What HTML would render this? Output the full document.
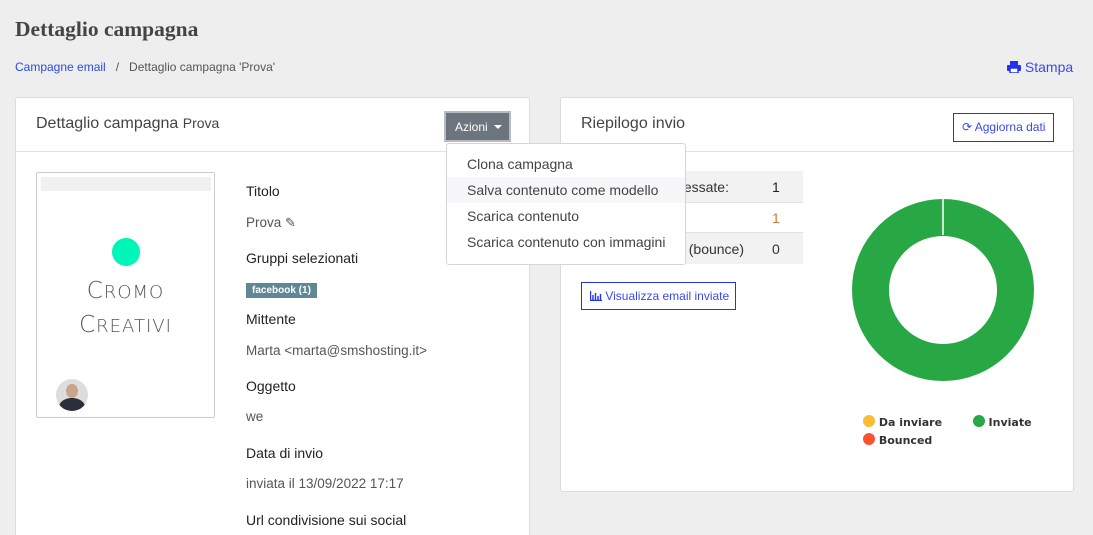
<!DOCTYPE html>
<html><head><meta charset="utf-8"><style>
*{box-sizing:border-box;margin:0;padding:0}
html,body{width:1093px;height:535px;overflow:hidden}
body{background:#eeeeee;font-family:"Liberation Sans",Arial,sans-serif;color:#333;position:relative}
.a{position:absolute;white-space:nowrap}
.card{position:absolute;background:#fff;border:1px solid #dcdcdc;border-radius:3px}
.hr{position:absolute;left:0;right:0;height:1px;background:#e2e2e2}
.lbl{font-size:14px;color:#222}
.val{font-size:13.5px;color:#555}
</style></head><body>
<div class="a" style="left:15px;top:17px;font-family:'Liberation Serif',serif;font-weight:bold;font-size:21.5px;color:#444">Dettaglio campagna</div>
<div class="a" style="left:15px;top:60px;font-size:12px;color:#555"><span style="color:#2a4ae0">Campagne email</span>&nbsp;&nbsp; /&nbsp;&nbsp; Dettaglio campagna 'Prova'</div>
<div class="a" style="left:1007px;top:59px;font-size:14px;color:#3a4ae8"><svg width="14" height="12" viewBox="0 0 14 12" style="vertical-align:-1px"><rect x="3" y="0" width="8" height="4" fill="#2233ee"/><rect x="0" y="4" width="14" height="6" rx="1" fill="#2233ee"/><rect x="3" y="7" width="8" height="5" fill="#fff" stroke="#2233ee" stroke-width="1.5"/></svg> Stampa</div>

<div class="card" style="left:15px;top:97px;width:515px;height:450px">
  <div class="a" style="left:20px;top:17px;font-size:16px;color:#444">Dettaglio campagna <span style="font-size:14px">Prova</span></div>
  <div class="a" style="left:428px;top:13px;width:67px;height:31px;background:#6c757d;border:2px solid #b8bcc0;color:#fff;font-size:12px;padding:7px 0 0 9px">Azioni <span style="display:inline-block;border:4px solid transparent;border-top:4px solid #fff;border-bottom:0;vertical-align:2px;margin-left:3px"></span></div>
  <div class="hr" style="top:53px"></div>
  <div class="a" style="left:20px;top:74px;width:179px;height:246px;border:1px solid #ccc;border-radius:2px">
    <div class="a" style="left:4px;top:4px;width:170px;height:14px;background:#f0f0f0"></div>
    <div class="a" style="left:75px;top:65px;width:28px;height:28px;border-radius:50%;background:#00f5b8"></div>
    <div class="a" style="left:0;width:177px;text-align:center;top:102px;font-size:23px;color:#555;letter-spacing:1px;line-height:32px;font-family:'DejaVu Sans',sans-serif;font-weight:200;transform:scaleY(1);">C<span style="font-size:18px">ROMO</span><br>C<span style="font-size:18px">REATIVI</span></div>
    <div class="a" style="left:19px;top:206px;width:32px;height:32px;border-radius:50%;overflow:hidden;background:#ddd">
      <div class="a" style="left:10px;top:5px;width:12px;height:14px;border-radius:50%;background:#c9a38a"></div>
      <div class="a" style="left:3px;top:19px;width:26px;height:18px;border-radius:50% 50% 0 0;background:#2a2f3a"></div>
    </div>
  </div>
  <div class="a lbl" style="left:230px;top:85px">Titolo</div>
  <div class="a val" style="left:230px;top:117px">Prova <span style="font-size:13px">&#9998;</span></div>
  <div class="a lbl" style="left:230px;top:152px">Gruppi selezionati</div>
  <div class="a" style="left:230px;top:185px;background:#5f8796;color:#fff;font-size:10px;font-weight:bold;padding:2px 6px">facebook (1)</div>
  <div class="a lbl" style="left:230px;top:213px">Mittente</div>
  <div class="a val" style="left:230px;top:245px">Marta &lt;marta@smshosting.it&gt;</div>
  <div class="a lbl" style="left:230px;top:280px">Oggetto</div>
  <div class="a val" style="left:230px;top:311px">we</div>
  <div class="a lbl" style="left:230px;top:347px">Data di invio</div>
  <div class="a val" style="left:230px;top:378px">inviata il 13/09/2022 17:17</div>
  <div class="a lbl" style="left:230px;top:414px">Url condivisione sui social</div>
</div>

<div class="card" style="left:560px;top:97px;width:514px;height:395px">
  <div class="a" style="left:20px;top:17px;font-size:16px;color:#444">Riepilogo invio</div>
  <div class="a" style="left:392px;top:15px;width:101px;height:29px;border:1px solid #2233ee;color:#3a4ae8;font-size:12px;padding:6px 0 0 8px">&#10227; Aggiorna dati</div>
  <div class="hr" style="top:53px"></div>
  <div class="a" style="left:19px;top:73px;width:223px;height:31px;background:#f2f2f2"></div>
  <div class="a" style="left:19px;top:104px;width:223px;height:31px;border-top:1px solid #e2e2e2;border-bottom:1px solid #e2e2e2"></div>
  <div class="a" style="left:19px;top:135px;width:223px;height:31px;background:#f2f2f2"></div>
  <div class="a" style="left:20px;top:81px;width:148px;text-align:right;font-size:14px;color:#333">Email processate:</div>
  <div class="a" style="left:20px;top:143px;width:163px;text-align:right;font-size:14px;color:#333">Non consegnate (bounce)</div>
  <div class="a" style="left:211px;top:81px;font-size:14px;color:#222">1</div>
  <div class="a" style="left:211px;top:112px;font-size:14px;color:#d07a30">1</div>
  <div class="a" style="left:211px;top:143px;font-size:14px;color:#333">0</div>
  <div class="a" style="left:20px;top:184px;width:155px;height:28px;border:1px solid #2233ee;color:#3a4ae8;font-size:12px;padding:6px 0 0 8px"><svg width="12" height="10" viewBox="0 0 12 10" style="vertical-align:-1px"><path d="M0.5 0V9.5H12M3 4v5M5.5 2v7M8 5v4M10.5 3v6" stroke="#2233ee" stroke-width="1.4" fill="none"/></svg> Visualizza email inviate</div>
  <svg class="a" style="left:290px;top:100px" width="184" height="184" viewBox="0 0 184 184"><circle cx="92" cy="92" r="72.5" fill="none" stroke="#28a745" stroke-width="37"/><line x1="92" y1="0" x2="92" y2="37" stroke="#fff" stroke-width="1.5"/></svg>
  <div class="a" style="left:302px;top:316px;font-family:'DejaVu Sans',sans-serif;font-size:11px;font-weight:bold;color:#333;line-height:18px">
    <span style="display:inline-block;width:12px;height:12px;border-radius:50%;background:#fbbd33;vertical-align:-1px"></span> Da inviare&nbsp;&nbsp;&nbsp;&nbsp;&nbsp;&nbsp;&nbsp;&nbsp;<span style="display:inline-block;width:12px;height:12px;border-radius:50%;background:#28a745;vertical-align:-1px"></span> Inviate<br>
    <span style="display:inline-block;width:12px;height:12px;border-radius:50%;background:#fc5130;vertical-align:-1px"></span> Bounced</div>
</div>

<div class="a" style="left:446px;top:143px;width:240px;height:122px;background:#fff;border:1px solid #d5d5d5;border-radius:3px;font-size:14px;color:#444">
  <div class="a" style="left:0;top:33px;width:238px;height:26px;background:#f7f7f9"></div>
  <div class="a" style="left:20px;top:12px">Clona campagna</div>
  <div class="a" style="left:20px;top:38px">Salva contenuto come modello</div>
  <div class="a" style="left:20px;top:64px">Scarica contenuto</div>
  <div class="a" style="left:20px;top:90px">Scarica contenuto con immagini</div>
</div>
</body></html>
